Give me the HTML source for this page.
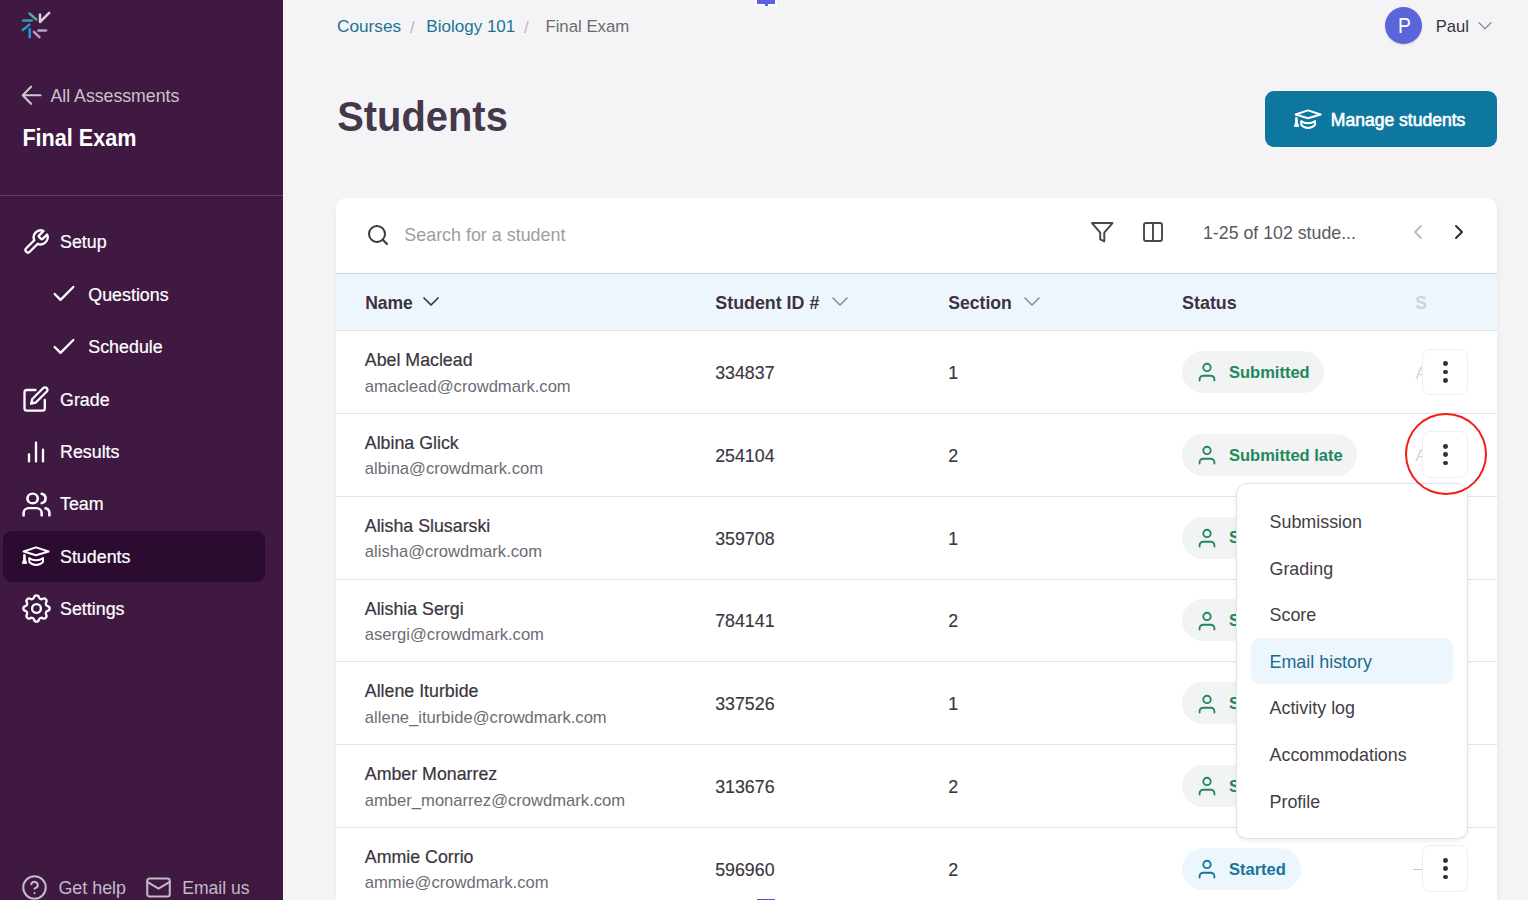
<!DOCTYPE html>
<html><head><meta charset="utf-8"><title>Students</title>
<style>
html,body{margin:0;padding:0;width:1528px;height:900px;overflow:hidden;background:#f4f4f6;font-family:"Liberation Sans",sans-serif}
.t{position:absolute;line-height:1;white-space:nowrap}
</style></head><body>
<div style="position:absolute;left:0;top:0;width:283px;height:900px;background:#3f1942"></div><svg style="position:absolute;left:0;top:0" width="70" height="50" viewBox="0 0 70 50" fill="none" stroke-linecap="round" stroke-width="2.5">
<line x1="29.6" y1="13.6" x2="36.2" y2="19.4" stroke="#4fb3a0"/>
<line x1="23.2" y1="20.6" x2="31.6" y2="20.6" stroke="#2f9fb0"/>
<line x1="29.4" y1="24.6" x2="22.8" y2="30.0" stroke="#1e9bd0"/>
<line x1="29.7" y1="29.2" x2="29.7" y2="37.2" stroke="#1e9bd0"/>
<line x1="33.9" y1="31.9" x2="39.4" y2="37.2" stroke="#b9a3bd"/>
<line x1="38.4" y1="30.6" x2="46.0" y2="30.6" stroke="#b9a3bd"/>
<polyline points="40,14.6 40,22 49.2,12.8" stroke="#d6d3d6" stroke-linejoin="round"/>
</svg><svg style="position:absolute;left:17.5px;top:81px" width="28.5" height="28.5" viewBox="0 0 24 24" fill="none" stroke="#cdc8ce" stroke-width="1.75" stroke-linecap="round" stroke-linejoin="round"><path d="M19 12H4M11 4.8l-7 7.2 7 7.2"/></svg><div class="t " style="left:50.5px;top:88.22px;font-size:17.7px;color:#cbc3cc;">All Assessments</div>
<div class="t " style="left:22.4px;top:128.12px;font-size:21.6px;color:#ffffff;font-weight:700;transform:scaleY(1.11);transform-origin:0 18.3px;">Final Exam</div>
<div style="position:absolute;left:0;top:195px;width:283px;height:1px;background:#5b3d5e"></div><div style="position:absolute;left:3px;top:531px;width:262px;height:51px;border-radius:9px;background:#2c0b31"></div><svg style="position:absolute;left:22px;top:228.0px" width="28" height="28" viewBox="0 0 24 24" fill="none" stroke="#fff" stroke-width="2" stroke-linecap="round" stroke-linejoin="round"><path d="M14.7 6.3a1 1 0 0 0 0 1.4l1.6 1.6a1 1 0 0 0 1.4 0l3.77-3.77a6 6 0 0 1-7.94 7.94l-6.91 6.91a2.12 2.12 0 0 1-3-3l6.91-6.91a6 6 0 0 1 7.94-7.94l-3.76 3.76z"/></svg>
<div class="t " style="left:60px;top:234.19px;font-size:17.85px;color:#ffffff;-webkit-text-stroke:0.2px #fff;">Setup</div>
<svg style="position:absolute;left:50px;top:280.45px" width="28" height="28" viewBox="0 0 24 24" fill="none" stroke="#fff" stroke-width="2" stroke-linecap="round" stroke-linejoin="round"><path d="M20 6 9 17l-5-5"/></svg>
<div class="t " style="left:88.3px;top:286.64px;font-size:17.85px;color:#ffffff;-webkit-text-stroke:0.2px #fff;">Questions</div>
<svg style="position:absolute;left:50px;top:332.90000000000003px" width="28" height="28" viewBox="0 0 24 24" fill="none" stroke="#fff" stroke-width="2" stroke-linecap="round" stroke-linejoin="round"><path d="M20 6 9 17l-5-5"/></svg>
<div class="t " style="left:88.3px;top:339.09px;font-size:17.85px;color:#ffffff;-webkit-text-stroke:0.2px #fff;">Schedule</div>
<svg style="position:absolute;left:21.2px;top:385.35px" width="28" height="28" viewBox="0 0 24 24" fill="none" stroke="#fff" stroke-width="2" stroke-linecap="round" stroke-linejoin="round"><path d="M12.4 4.3H5a2 2 0 0 0-2 2v13.7a2 2 0 0 0 2 2h13.4a2 2 0 0 0 2-2v-7.2"/><path d="M19.1 2.6a2.121 2.121 0 1 1 3 3L12.7 15l-4 1 1-4Z"/></svg>
<div class="t " style="left:60px;top:391.54px;font-size:17.85px;color:#ffffff;-webkit-text-stroke:0.2px #fff;">Grade</div>
<svg style="position:absolute;left:22px;top:437.8px" width="28" height="28" viewBox="0 0 24 24" fill="none" stroke="#fff" stroke-width="2" stroke-linecap="round" stroke-linejoin="round"><line x1="18" x2="18" y1="20" y2="10"/><line x1="12" x2="12" y1="20" y2="4"/><line x1="6" x2="6" y1="20" y2="14"/></svg>
<div class="t " style="left:60px;top:443.99px;font-size:17.85px;color:#ffffff;-webkit-text-stroke:0.2px #fff;">Results</div>
<svg style="position:absolute;left:20.6px;top:490.2px" width="31" height="29" viewBox="0 0 24 24" preserveAspectRatio="none" fill="none" stroke="#fff" stroke-width="2" stroke-linecap="round" stroke-linejoin="round"><path d="M16 21v-2a4 4 0 0 0-4-4H6a4 4 0 0 0-4 4v2"/><circle cx="9" cy="7" r="4"/><path d="M22 21v-2a4 4 0 0 0-3-3.87"/><path d="M16 3.13a4 4 0 0 1 0 7.75"/></svg><div class="t " style="left:60px;top:496.44px;font-size:17.85px;color:#ffffff;-webkit-text-stroke:0.2px #fff;">Team</div>
<svg style="position:absolute;left:18px;top:540px" width="40" height="32" viewBox="0 0 40 32" fill="none" stroke="#fff" stroke-width="2" stroke-linecap="round" stroke-linejoin="round"><path d="M5.6 11.5 18 7.4 30.6 11.5 18 15.3Z"/><path d="M11.3 18.2v3.6c1.6 2 4 3.1 6.8 3.1s5.2-1.1 6.9-3.1v-3.6"/><path d="M11.3 18.2c2 1.4 4.3 2 6.8 2s4.9-.6 6.9-2"/><path d="M5.9 14.6h1.2l.5 5 1.2 3.9H4.3l1.1-3.9Z" fill="#fff" stroke-width="0.8"/></svg><div class="t " style="left:60px;top:548.89px;font-size:17.85px;color:#ffffff;-webkit-text-stroke:0.2px #fff;">Students</div>
<svg style="position:absolute;left:18.7px;top:591.3px" width="35" height="35" viewBox="0 0 24 24" fill="none" stroke="#fff" stroke-width="1.6" stroke-linecap="round" stroke-linejoin="round"><path d="M10.325 4.317c.426 -1.756 2.924 -1.756 3.35 0a1.724 1.724 0 0 0 2.573 1.066c1.543 -.94 3.31 .826 2.37 2.37a1.724 1.724 0 0 0 1.065 2.572c1.756 .426 1.756 2.924 0 3.35a1.724 1.724 0 0 0 -1.066 2.573c.94 1.543 -.826 3.31 -2.37 2.37a1.724 1.724 0 0 0 -2.572 1.065c-.426 1.756 -2.924 1.756 -3.35 0a1.724 1.724 0 0 0 -2.573 -1.066c-1.543 .94 -3.31 -.826 -2.37 -2.37a1.724 1.724 0 0 0 -1.065 -2.572c-1.756 -.426 -1.756 -2.924 0 -3.35a1.724 1.724 0 0 0 1.066 -2.573c-.94 -1.543 .826 -3.31 2.37 -2.37c1 .608 2.296 .07 2.572 -1.065z"/><circle cx="12" cy="12" r="3"/></svg>
<div class="t " style="left:60px;top:601.34px;font-size:17.85px;color:#ffffff;-webkit-text-stroke:0.2px #fff;">Settings</div>
<svg style="position:absolute;left:21px;top:874px" width="27" height="27" viewBox="0 0 24 24" fill="none" stroke="#c3bbc5" stroke-width="1.8" stroke-linecap="round" stroke-linejoin="round"><circle cx="12" cy="12" r="10"/><path d="M9.09 9a3 3 0 0 1 5.83 1c0 2-3 3-3 3"/><path d="M12 17h.01"/></svg>
<div class="t " style="left:58.4px;top:879.95px;font-size:17.9px;color:#c3bbc5;">Get help</div>
<svg style="position:absolute;left:145px;top:874px" width="27" height="27" viewBox="0 0 24 24" fill="none" stroke="#c3bbc5" stroke-width="1.8" stroke-linecap="round" stroke-linejoin="round"><rect x="2" y="4" width="20" height="16" rx="2"/><path d="m22 7-10 6L2 7"/></svg>
<div class="t " style="left:182.2px;top:880.24px;font-size:17.55px;color:#c3bbc5;">Email us</div>
<div class="t " style="left:337.1px;top:18.34px;font-size:17.2px;color:#1b7393;">Courses</div>
<div class="t " style="left:410px;top:18.51px;font-size:17px;color:#b9b9be;">/</div>
<div class="t " style="left:426.3px;top:18.47px;font-size:17.05px;color:#1b7393;">Biology 101</div>
<div class="t " style="left:524px;top:18.51px;font-size:17px;color:#b9b9be;">/</div>
<div class="t " style="left:545.4px;top:18.68px;font-size:16.8px;color:#6c6b70;">Final Exam</div>
<div class="t " style="left:337.2px;top:97.82px;font-size:39.9px;color:#45384a;font-weight:700;transform:scaleY(1.045);transform-origin:0 33.8px;">Students</div>
<div style="position:absolute;left:1384.7px;top:6.7px;width:37px;height:37px;border-radius:50%;background:#5a65dc;box-shadow:0 1px 2px rgba(0,0,0,.15)"></div><div class="t " style="left:1398px;top:14.55px;font-size:22.5px;color:#ffffff;transform:scaleX(0.86);transform-origin:0 0;">P</div>
<div class="t " style="left:1435.8px;top:19.45px;font-size:16.6px;color:#3a2f3e;">Paul</div>
<svg style="position:absolute;left:1476px;top:16px" width="18" height="18" viewBox="0 0 24 24" fill="none" stroke="#8a8790" stroke-width="1.6" stroke-linecap="round" stroke-linejoin="round"><path d="m4 9 8 8 8-8"/></svg>
<div style="position:absolute;left:1265px;top:91px;width:231.5px;height:55.5px;border-radius:9px;background:#0d77a0"></div><svg style="position:absolute;left:1289.6px;top:102.6px" width="40" height="32" viewBox="0 0 40 32" fill="none" stroke="#fff" stroke-width="2" stroke-linecap="round" stroke-linejoin="round"><path d="M5.6 11.5 18 7.4 30.6 11.5 18 15.3Z"/><path d="M11.3 18.2v3.6c1.6 2 4 3.1 6.8 3.1s5.2-1.1 6.9-3.1v-3.6"/><path d="M11.3 18.2c2 1.4 4.3 2 6.8 2s4.9-.6 6.9-2"/><path d="M5.9 14.6h1.2l.5 5 1.2 3.9H4.3l1.1-3.9Z" fill="#fff" stroke-width="0.8"/></svg><div class="t " style="left:1330.8px;top:111.74px;font-size:17.55px;color:#ffffff;-webkit-text-stroke:0.6px #fff;">Manage students</div>
<div style="position:absolute;left:336px;top:198px;width:1160.5px;height:720px;border-radius:10px;background:#fff;box-shadow:1px 2px 5px rgba(30,50,80,.06)"></div><svg style="position:absolute;left:366px;top:223px" width="24" height="24" viewBox="0 0 24 24" fill="none" stroke="#3d3540" stroke-width="2" stroke-linecap="round" stroke-linejoin="round"><circle cx="11" cy="11" r="8"/><path d="m21 21-4.3-4.3"/></svg>
<div class="t " style="left:404.3px;top:227.45px;font-size:17.9px;color:#9d9ca3;">Search for a student</div>
<svg style="position:absolute;left:1090px;top:219.5px" width="24.5" height="24.5" viewBox="0 0 24 24" fill="none" stroke="#4a4450" stroke-width="1.9" stroke-linecap="round" stroke-linejoin="round"><path d="M22 3H2l8 9.46V19l4 2v-8.54L22 3z"/></svg>
<svg style="position:absolute;left:1141px;top:220px" width="24" height="24" viewBox="0 0 24 24" fill="none" stroke="#4a4450" stroke-width="1.9" stroke-linecap="round" stroke-linejoin="round"><rect x="3" y="3" width="18" height="18" rx="2"/><path d="M12 3v18"/></svg>
<div class="t " style="left:1203px;top:224.77px;font-size:17.76px;color:#5b5860;">1-25 of 102 stude...</div>
<svg style="position:absolute;left:1406px;top:220px" width="24" height="24" viewBox="0 0 24 24" fill="none" stroke="#bdbdc2" stroke-width="1.9" stroke-linecap="round" stroke-linejoin="round"><path d="m15 18-6-6 6-6"/></svg>
<svg style="position:absolute;left:1447px;top:220px" width="24" height="24" viewBox="0 0 24 24" fill="none" stroke="#2f2a33" stroke-width="2" stroke-linecap="round" stroke-linejoin="round"><path d="m9 18 6-6-6-6"/></svg>
<div style="position:absolute;left:336px;top:273px;width:1160.5px;height:58px;background:#eef6fd;border-top:1.5px solid #cfd5da;border-bottom:1px solid #dfe3e7;box-sizing:border-box"></div><div class="t " style="left:365.2px;top:295.19px;font-size:17.5px;color:#3d3241;font-weight:700;">Name</div>
<svg style="position:absolute;left:421px;top:291px" width="20" height="20" viewBox="0 0 20 20" fill="none" stroke="#3d3241" stroke-width="1.7" stroke-linecap="round" stroke-linejoin="round"><path d="m3 7 7 7 7-7"/></svg>
<div class="t " style="left:715.3px;top:294.91px;font-size:17.83px;color:#3d3241;font-weight:700;">Student ID #</div>
<svg style="position:absolute;left:830px;top:291px" width="20" height="20" viewBox="0 0 20 20" fill="none" stroke="#8d8a92" stroke-width="1.5" stroke-linecap="round" stroke-linejoin="round"><path d="m3 7 7 7 7-7"/></svg>
<div class="t " style="left:948.2px;top:295.07px;font-size:17.64px;color:#3d3241;font-weight:700;">Section</div>
<svg style="position:absolute;left:1022px;top:291px" width="20" height="20" viewBox="0 0 20 20" fill="none" stroke="#8d8a92" stroke-width="1.5" stroke-linecap="round" stroke-linejoin="round"><path d="m3 7 7 7 7-7"/></svg>
<div class="t " style="left:1182px;top:294.82px;font-size:17.93px;color:#3d3241;font-weight:700;">Status</div>
<div class="t " style="left:1415.2px;top:295.19px;font-size:17.5px;color:#d3d3d6;font-weight:700;">S</div>
<div class="t " style="left:364.8px;top:352.23px;font-size:17.8px;color:#3b3540;-webkit-text-stroke:0.2px #3b3540;">Abel Maclead</div>
<div class="t " style="left:364.8px;top:378.55px;font-size:16.6px;color:#6f6b74;">amaclead@crowdmark.com</div>
<div class="t " style="left:715.2px;top:365.03px;font-size:17.8px;color:#3b3540;-webkit-text-stroke:0.15px #3b3540;">334837</div>
<div class="t " style="left:948.3px;top:365.03px;font-size:17.8px;color:#3b3540;-webkit-text-stroke:0.15px #3b3540;">1</div>
<div style="position:absolute;left:1181.5px;top:350.9px;width:142.3px;height:42px;border-radius:21px;background:#f1f3f4"></div><svg style="position:absolute;left:1195px;top:360.4px" width="24" height="24" viewBox="0 0 24 24" fill="none" stroke="#23875a" stroke-width="1.85" stroke-linecap="round" stroke-linejoin="round"><circle cx="12" cy="7.4" r="3.7"/><path d="M4.6 20.6v-1.3a3.6 3.6 0 0 1 3.6-3.6h7.6a3.6 3.6 0 0 1 3.6 3.6v1.3"/></svg>
<div class="t " style="left:1229px;top:363.73px;font-size:16.5px;color:#23875a;font-weight:700;">Submitted</div>
<div class="t " style="left:1415.5px;top:364.61px;font-size:17px;color:#d5d5d8;">A</div>
<div style="position:absolute;left:1422.3px;top:348.6px;width:46px;height:46.3px;border-radius:8px;background:#fff;border:1.2px solid #eceef0;box-sizing:border-box"></div><div style="position:absolute;left:1443.1px;top:361.2px;width:4.8px;height:4.8px;border-radius:50%;background:#35303a"></div><div style="position:absolute;left:1443.1px;top:369.5px;width:4.8px;height:4.8px;border-radius:50%;background:#35303a"></div><div style="position:absolute;left:1443.1px;top:377.8px;width:4.8px;height:4.8px;border-radius:50%;background:#35303a"></div><div style="position:absolute;left:336px;top:413.0px;width:1160.5px;height:1px;background:#e1e4e8"></div><div class="t " style="left:364.8px;top:435.03px;font-size:17.8px;color:#3b3540;-webkit-text-stroke:0.2px #3b3540;">Albina Glick</div>
<div class="t " style="left:364.8px;top:461.35px;font-size:16.6px;color:#6f6b74;">albina@crowdmark.com</div>
<div class="t " style="left:715.2px;top:447.83px;font-size:17.8px;color:#3b3540;-webkit-text-stroke:0.15px #3b3540;">254104</div>
<div class="t " style="left:948.3px;top:447.83px;font-size:17.8px;color:#3b3540;-webkit-text-stroke:0.15px #3b3540;">2</div>
<div style="position:absolute;left:1181.5px;top:433.7px;width:175.5px;height:42px;border-radius:21px;background:#f1f3f4"></div><svg style="position:absolute;left:1195px;top:443.2px" width="24" height="24" viewBox="0 0 24 24" fill="none" stroke="#23875a" stroke-width="1.85" stroke-linecap="round" stroke-linejoin="round"><circle cx="12" cy="7.4" r="3.7"/><path d="M4.6 20.6v-1.3a3.6 3.6 0 0 1 3.6-3.6h7.6a3.6 3.6 0 0 1 3.6 3.6v1.3"/></svg>
<div class="t " style="left:1229px;top:446.53px;font-size:16.5px;color:#23875a;font-weight:700;">Submitted late</div>
<div class="t " style="left:1415.5px;top:447.41px;font-size:17px;color:#d5d5d8;">A</div>
<div style="position:absolute;left:1422.3px;top:431.4px;width:46px;height:46.3px;border-radius:8px;background:#fff;border:1.2px solid #eceef0;box-sizing:border-box"></div><div style="position:absolute;left:1443.1px;top:444.0px;width:4.8px;height:4.8px;border-radius:50%;background:#35303a"></div><div style="position:absolute;left:1443.1px;top:452.3px;width:4.8px;height:4.8px;border-radius:50%;background:#35303a"></div><div style="position:absolute;left:1443.1px;top:460.6px;width:4.8px;height:4.8px;border-radius:50%;background:#35303a"></div><div style="position:absolute;left:336px;top:495.8px;width:1160.5px;height:1px;background:#e1e4e8"></div><div class="t " style="left:364.8px;top:517.83px;font-size:17.8px;color:#3b3540;-webkit-text-stroke:0.2px #3b3540;">Alisha Slusarski</div>
<div class="t " style="left:364.8px;top:544.15px;font-size:16.6px;color:#6f6b74;">alisha@crowdmark.com</div>
<div class="t " style="left:715.2px;top:530.63px;font-size:17.8px;color:#3b3540;-webkit-text-stroke:0.15px #3b3540;">359708</div>
<div class="t " style="left:948.3px;top:530.63px;font-size:17.8px;color:#3b3540;-webkit-text-stroke:0.15px #3b3540;">1</div>
<div style="position:absolute;left:1181.5px;top:516.5px;width:142.3px;height:42px;border-radius:21px;background:#f1f3f4"></div><svg style="position:absolute;left:1195px;top:526.0px" width="24" height="24" viewBox="0 0 24 24" fill="none" stroke="#23875a" stroke-width="1.85" stroke-linecap="round" stroke-linejoin="round"><circle cx="12" cy="7.4" r="3.7"/><path d="M4.6 20.6v-1.3a3.6 3.6 0 0 1 3.6-3.6h7.6a3.6 3.6 0 0 1 3.6 3.6v1.3"/></svg>
<div class="t " style="left:1229px;top:529.33px;font-size:16.5px;color:#23875a;font-weight:700;">S</div>
<div style="position:absolute;left:1422.3px;top:514.2px;width:46px;height:46.3px;border-radius:8px;background:#fff;border:1.2px solid #eceef0;box-sizing:border-box"></div><div style="position:absolute;left:1443.1px;top:526.8px;width:4.8px;height:4.8px;border-radius:50%;background:#35303a"></div><div style="position:absolute;left:1443.1px;top:535.1px;width:4.8px;height:4.8px;border-radius:50%;background:#35303a"></div><div style="position:absolute;left:1443.1px;top:543.4px;width:4.8px;height:4.8px;border-radius:50%;background:#35303a"></div><div style="position:absolute;left:336px;top:578.6px;width:1160.5px;height:1px;background:#e1e4e8"></div><div class="t " style="left:364.8px;top:600.63px;font-size:17.8px;color:#3b3540;-webkit-text-stroke:0.2px #3b3540;">Alishia Sergi</div>
<div class="t " style="left:364.8px;top:626.95px;font-size:16.6px;color:#6f6b74;">asergi@crowdmark.com</div>
<div class="t " style="left:715.2px;top:613.43px;font-size:17.8px;color:#3b3540;-webkit-text-stroke:0.15px #3b3540;">784141</div>
<div class="t " style="left:948.3px;top:613.43px;font-size:17.8px;color:#3b3540;-webkit-text-stroke:0.15px #3b3540;">2</div>
<div style="position:absolute;left:1181.5px;top:599.3px;width:142.3px;height:42px;border-radius:21px;background:#f1f3f4"></div><svg style="position:absolute;left:1195px;top:608.8px" width="24" height="24" viewBox="0 0 24 24" fill="none" stroke="#23875a" stroke-width="1.85" stroke-linecap="round" stroke-linejoin="round"><circle cx="12" cy="7.4" r="3.7"/><path d="M4.6 20.6v-1.3a3.6 3.6 0 0 1 3.6-3.6h7.6a3.6 3.6 0 0 1 3.6 3.6v1.3"/></svg>
<div class="t " style="left:1229px;top:612.13px;font-size:16.5px;color:#23875a;font-weight:700;">S</div>
<div style="position:absolute;left:1422.3px;top:597.0px;width:46px;height:46.3px;border-radius:8px;background:#fff;border:1.2px solid #eceef0;box-sizing:border-box"></div><div style="position:absolute;left:1443.1px;top:609.6px;width:4.8px;height:4.8px;border-radius:50%;background:#35303a"></div><div style="position:absolute;left:1443.1px;top:617.9px;width:4.8px;height:4.8px;border-radius:50%;background:#35303a"></div><div style="position:absolute;left:1443.1px;top:626.2px;width:4.8px;height:4.8px;border-radius:50%;background:#35303a"></div><div style="position:absolute;left:336px;top:661.4px;width:1160.5px;height:1px;background:#e1e4e8"></div><div class="t " style="left:364.8px;top:683.43px;font-size:17.8px;color:#3b3540;-webkit-text-stroke:0.2px #3b3540;">Allene Iturbide</div>
<div class="t " style="left:364.8px;top:709.75px;font-size:16.6px;color:#6f6b74;">allene_iturbide@crowdmark.com</div>
<div class="t " style="left:715.2px;top:696.23px;font-size:17.8px;color:#3b3540;-webkit-text-stroke:0.15px #3b3540;">337526</div>
<div class="t " style="left:948.3px;top:696.23px;font-size:17.8px;color:#3b3540;-webkit-text-stroke:0.15px #3b3540;">1</div>
<div style="position:absolute;left:1181.5px;top:682.1px;width:142.3px;height:42px;border-radius:21px;background:#f1f3f4"></div><svg style="position:absolute;left:1195px;top:691.6px" width="24" height="24" viewBox="0 0 24 24" fill="none" stroke="#23875a" stroke-width="1.85" stroke-linecap="round" stroke-linejoin="round"><circle cx="12" cy="7.4" r="3.7"/><path d="M4.6 20.6v-1.3a3.6 3.6 0 0 1 3.6-3.6h7.6a3.6 3.6 0 0 1 3.6 3.6v1.3"/></svg>
<div class="t " style="left:1229px;top:694.93px;font-size:16.5px;color:#23875a;font-weight:700;">S</div>
<div style="position:absolute;left:1422.3px;top:679.8px;width:46px;height:46.3px;border-radius:8px;background:#fff;border:1.2px solid #eceef0;box-sizing:border-box"></div><div style="position:absolute;left:1443.1px;top:692.4px;width:4.8px;height:4.8px;border-radius:50%;background:#35303a"></div><div style="position:absolute;left:1443.1px;top:700.7px;width:4.8px;height:4.8px;border-radius:50%;background:#35303a"></div><div style="position:absolute;left:1443.1px;top:709.0px;width:4.8px;height:4.8px;border-radius:50%;background:#35303a"></div><div style="position:absolute;left:336px;top:744.2px;width:1160.5px;height:1px;background:#e1e4e8"></div><div class="t " style="left:364.8px;top:766.23px;font-size:17.8px;color:#3b3540;-webkit-text-stroke:0.2px #3b3540;">Amber Monarrez</div>
<div class="t " style="left:364.8px;top:792.55px;font-size:16.6px;color:#6f6b74;">amber_monarrez@crowdmark.com</div>
<div class="t " style="left:715.2px;top:779.03px;font-size:17.8px;color:#3b3540;-webkit-text-stroke:0.15px #3b3540;">313676</div>
<div class="t " style="left:948.3px;top:779.03px;font-size:17.8px;color:#3b3540;-webkit-text-stroke:0.15px #3b3540;">2</div>
<div style="position:absolute;left:1181.5px;top:764.9px;width:142.3px;height:42px;border-radius:21px;background:#f1f3f4"></div><svg style="position:absolute;left:1195px;top:774.4000000000001px" width="24" height="24" viewBox="0 0 24 24" fill="none" stroke="#23875a" stroke-width="1.85" stroke-linecap="round" stroke-linejoin="round"><circle cx="12" cy="7.4" r="3.7"/><path d="M4.6 20.6v-1.3a3.6 3.6 0 0 1 3.6-3.6h7.6a3.6 3.6 0 0 1 3.6 3.6v1.3"/></svg>
<div class="t " style="left:1229px;top:777.73px;font-size:16.5px;color:#23875a;font-weight:700;">S</div>
<div style="position:absolute;left:1422.3px;top:762.6px;width:46px;height:46.3px;border-radius:8px;background:#fff;border:1.2px solid #eceef0;box-sizing:border-box"></div><div style="position:absolute;left:1443.1px;top:775.2px;width:4.8px;height:4.8px;border-radius:50%;background:#35303a"></div><div style="position:absolute;left:1443.1px;top:783.5px;width:4.8px;height:4.8px;border-radius:50%;background:#35303a"></div><div style="position:absolute;left:1443.1px;top:791.8px;width:4.8px;height:4.8px;border-radius:50%;background:#35303a"></div><div style="position:absolute;left:336px;top:827.0px;width:1160.5px;height:1px;background:#e1e4e8"></div><div class="t " style="left:364.8px;top:849.03px;font-size:17.8px;color:#3b3540;-webkit-text-stroke:0.2px #3b3540;">Ammie Corrio</div>
<div class="t " style="left:364.8px;top:875.35px;font-size:16.6px;color:#6f6b74;">ammie@crowdmark.com</div>
<div class="t " style="left:715.2px;top:861.83px;font-size:17.8px;color:#3b3540;-webkit-text-stroke:0.15px #3b3540;">596960</div>
<div class="t " style="left:948.3px;top:861.83px;font-size:17.8px;color:#3b3540;-webkit-text-stroke:0.15px #3b3540;">2</div>
<div style="position:absolute;left:1181.5px;top:847.7px;width:119.4px;height:42px;border-radius:21px;background:#eef6fd"></div><svg style="position:absolute;left:1195px;top:857.2px" width="24" height="24" viewBox="0 0 24 24" fill="none" stroke="#15749a" stroke-width="1.85" stroke-linecap="round" stroke-linejoin="round"><circle cx="12" cy="7.4" r="3.7"/><path d="M4.6 20.6v-1.3a3.6 3.6 0 0 1 3.6-3.6h7.6a3.6 3.6 0 0 1 3.6 3.6v1.3"/></svg>
<div class="t " style="left:1229px;top:860.53px;font-size:16.5px;color:#15749a;font-weight:700;">Started</div>
<div style="position:absolute;left:1413px;top:869.2px;width:10px;height:1.2px;background:#c8c8cc"></div><div style="position:absolute;left:1422.3px;top:845.4px;width:46px;height:46.3px;border-radius:8px;background:#fff;border:1.2px solid #eceef0;box-sizing:border-box"></div><div style="position:absolute;left:1443.1px;top:858.0px;width:4.8px;height:4.8px;border-radius:50%;background:#35303a"></div><div style="position:absolute;left:1443.1px;top:866.3px;width:4.8px;height:4.8px;border-radius:50%;background:#35303a"></div><div style="position:absolute;left:1443.1px;top:874.6px;width:4.8px;height:4.8px;border-radius:50%;background:#35303a"></div><div style="position:absolute;left:1235.6px;top:483px;width:232.4px;height:356.4px;border-radius:11px;background:#fff;border:1.2px solid #dfe2e6;box-sizing:border-box;box-shadow:0 2px 4px rgba(20,20,40,.07)"></div><div style="position:absolute;left:1251px;top:637.6px;width:202.3px;height:46.8px;border-radius:9px;background:#eef6fd"></div><div class="t " style="left:1269.5px;top:513.85px;font-size:17.9px;color:#433d47;">Submission</div>
<div class="t " style="left:1269.5px;top:560.50px;font-size:17.9px;color:#433d47;">Grading</div>
<div class="t " style="left:1269.5px;top:607.15px;font-size:17.9px;color:#433d47;">Score</div>
<div class="t " style="left:1269.5px;top:653.80px;font-size:17.9px;color:#1a6b8c;">Email history</div>
<div class="t " style="left:1269.5px;top:700.45px;font-size:17.9px;color:#433d47;">Activity log</div>
<div class="t " style="left:1269.5px;top:747.10px;font-size:17.9px;color:#433d47;">Accommodations</div>
<div class="t " style="left:1269.5px;top:793.75px;font-size:17.9px;color:#433d47;">Profile</div>
<div style="position:absolute;left:1405px;top:413.2px;width:81.7px;height:81.6px;border-radius:50%;border:2.8px solid #f21d18;box-sizing:border-box"></div><div style="position:absolute;left:755px;top:0;width:22px;height:6px;background:#fff"></div><div style="position:absolute;left:757px;top:0;width:18px;height:4px;background:#5d5fe0"></div><div style="position:absolute;left:765px;top:4px;width:3px;height:2px;background:#5d5fe0"></div><div style="position:absolute;left:757px;top:898.8px;width:18px;height:1.2px;background:#4f50d8"></div>
</body></html>
